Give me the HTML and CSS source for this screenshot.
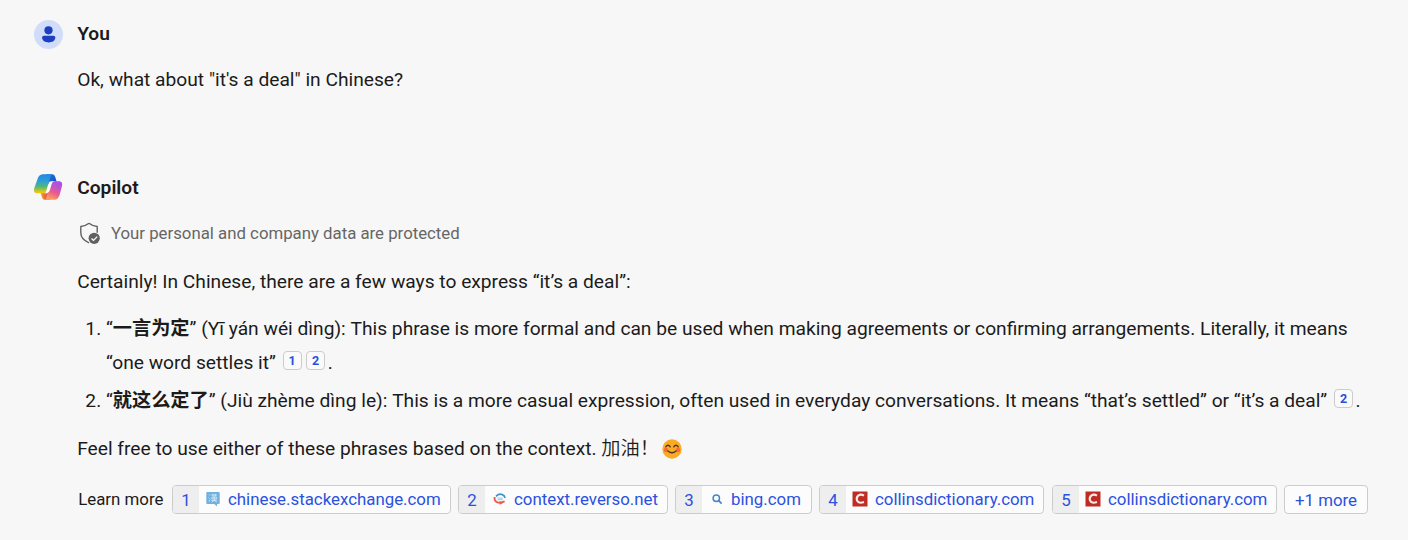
FILE: index.html
```html
<!DOCTYPE html>
<html lang="en">
<head>
<meta charset="utf-8">
<title>Copilot chat</title>
<link rel="stylesheet" href="styles.css">
</head>
<body>
<main class="chat">
  <section class="turn turn-user">
    <svg class="avatar" viewBox="0 0 30 30"><circle cx="14.500" cy="14.500" r="14.500" fill="#d1dbfa"/><circle cx="14.500" cy="10.300" r="4.100" fill="#1b3fbd"/><path d="M9.900 15.800h9.600q1.800 0 1.800 1.800c0 3.200-3.200 4.900-6.600 4.900s-6.600-1.700-6.600-4.900q0-1.800 1.800-1.800z" fill="#1b3fbd"/></svg>
    <div class="body">
      <h2 class="author">You</h2>
      <p class="text question">Ok, what about "it's a deal" in Chinese?</p>
    </div>
  </section>
  <section class="turn turn-bot">
    <svg class="avatar logo" viewBox="0.700 0.700 30 30">
      <defs>
        <linearGradient id="left" x1="0" y1="0" x2="0" y2="1"><stop offset="0" stop-color="#2784e5"/><stop offset=".35" stop-color="#2c9ed6"/><stop offset=".65" stop-color="#52b878"/><stop offset=".95" stop-color="#edca08"/></linearGradient>
        <linearGradient id="right" x1=".7" y1="0" x2=".3" y2="1"><stop offset="0" stop-color="#a650ed"/><stop offset=".35" stop-color="#c456c4"/><stop offset=".6" stop-color="#ec5b88"/><stop offset="1" stop-color="#fca65d"/></linearGradient>
        <linearGradient id="top" x1="0" y1="0" x2="1" y2="1"><stop offset="0" stop-color="#1a7ee0"/><stop offset="1" stop-color="#1745bd"/></linearGradient>
        <linearGradient id="bottom" x1="0" y1="0" x2="1" y2="0"><stop offset="0" stop-color="#f4a52a"/><stop offset=".6" stop-color="#e9584a"/><stop offset="1" stop-color="#d94561"/></linearGradient>
      </defs>
      <path d="M13 2h5.600c2.500 0 3.200 2 3.900 4.500l.8 2.800H19c-2.500 0-3.500 1-4.300 3.500z" fill="url(#top)"/>
      <path d="M17 27.500h-5.200c-2.400 0-3-1.800-3.600-4l-1-3.200H11c2.600 0 3.500-1.300 4.300-3.800z" fill="url(#bottom)"/>
      <path d="M18.700 2H9.500C6.500 2 5 4.200 3.900 7.600L1.100 15.500C.1 18.700.4 21 4 21h5.500c2.300 0 3.100-1.200 3.800-3.500L16.600 6.200C17.300 3.800 17.700 2.200 18.700 2z" fill="url(#left)"/>
      <path d="M12.100 27.500H21c3 0 4.400-2.200 5.500-5.600l2-7.500c.9-3.200.4-5.500-3.200-5.500h-5.100c-2.300 0-3 1.200-3.700 3.500l-3 10.900c-.6 2.400-.6 3.900-1.400 4.200z" fill="url(#right)"/>
      <path d="M16 9.500q1.500-.8 4.800-.6-1.800.5-2.600 3.400l-1.400 4.900c-.9 2.900-2.400 4-6 3.900 2.200-.6 2.600-2.200 3-3.700z" fill="#fff"/>
    </svg>
    <div class="body">
      <h2 class="author">Copilot</h2>
      <div class="notice">
        <svg class="shield" viewBox="0 0 24 24"><path d="M12 2.300c2.500 2 5.100 3 8.200 3.200v6.300M12 2.300c-2.500 2-5.100 3-8.200 3.200v6.300c0 4.600 2.600 7.700 8.200 10" fill="none" stroke="#616161" stroke-width="1.400" stroke-linejoin="round"/><circle cx="17.200" cy="17.300" r="5.600" fill="#616161"/><path d="M14.500 17.500l2 1.900 3.700-3.800" fill="none" stroke="#fff" stroke-width="1.300"/></svg>
        <span>Your personal and company data are protected</span>
      </div>
      <p class="text">Certainly! In Chinese, there are a few ways to express “it’s a deal”:</p>
      <ol class="phrases">
        <li class="phrase"><span class="mark">1.</span><div>“<b>一言为定</b>” (Yī yán wéi dìng): This phrase is more formal and can be used when making agreements or confirming arrangements. Literally, it means<br>“one word settles it” <a class="cite">1</a><a class="cite">2</a>.</div></li>
        <li class="phrase"><span class="mark">2.</span><div>“<b>就这么定了</b>” (Jiù zhème dìng le): This is a more casual expression, often used in everyday conversations. It means “that’s settled” or “it’s a deal” <a class="cite">2</a>.</div></li>
      </ol>
      <p class="text closing">Feel free to use either of these phrases based on the context. <span class="zh">加油！</span>
        <svg class="emoji" viewBox="0 0 20 20"><circle cx="10" cy="10" r="9.700" fill="#fbab23"/><circle cx="4" cy="11" r="2.200" fill="#f76b35"/><circle cx="16" cy="11" r="2.200" fill="#f76b35"/><path d="M3.800 7.900q2.200-3.300 4.400 0M11.800 7.900q2.200-3.300 4.400 0M6 12q4 3.600 8 0" fill="none" stroke="#4a3021" stroke-width="1.300" stroke-linecap="round"/></svg>
      </p>
      <div class="sources">
        <span class="label">Learn more</span>
        <a class="source s1"><span class="num">1</span><svg class="fav" viewBox="0 0 16 16"><path d="M2.300 1h11.400q1 0 1 1v10q0 1-1 1H12v2.600L9.300 13h-7q-1 0-1-1V2q0-1 1-1z" fill="#70b2df"/><path d="M4 3.500l1 1M3.700 6.500l1 1M3.900 10.500l1.200-2M6.300 4H12M8 2.900v2.300M10.300 2.900v2.300M7 6h4.400v1.900H7zM9.200 5.500v4M6.300 9.300H12M9 9.500l-2.300 1.700M9.500 9.500l2.300 1.700" fill="none" stroke="#e9f5fc" stroke-width=".7"/></svg><span class="site">chinese.stackexchange.com</span></a>
        <a class="source s2"><span class="num">2</span><svg class="fav" viewBox="0 0 16 16"><path d="M4 5.300Q8 1.200 12.300 5L13 7" fill="none" stroke="#3e94d1" stroke-width="1.700"/><path d="M2.600 6v2.500q1 3.200 6 3.200l4-1.400" fill="none" stroke="#ed5b4c" stroke-width="1.900"/><path d="M7.500 10l3.500 2L7.800 13.800z" fill="#ed5b4c"/><path d="M5.500 7.100h5.300M5.500 8.700h5.300" stroke="#8cc2e5" stroke-width=".9"/></svg><span class="site">context.reverso.net</span></a>
        <a class="source s3"><span class="num">3</span><svg class="fav" viewBox="0 0 16 16"><circle cx="7.300" cy="7.200" r="3.200" fill="none" stroke="#4487c5" stroke-width="1.500"/><path d="M9.700 9.600l2.900 3" stroke="#4487c5" stroke-width="1.700"/></svg><span class="site">bing.com</span></a>
        <a class="source s4"><span class="num">4</span><svg class="fav" viewBox="0 0 16 16"><path d="M.5.500h15v15H.5z" fill="#bf2c26"/><path d="M12 4.700Q8.800 2.700 6.200 4.600 4 6.500 5 9.400q1.600 3.500 7 1.700" fill="none" stroke="#fbe9e4" stroke-width="2.100"/></svg><span class="site">collinsdictionary.com</span></a>
        <a class="source s5"><span class="num">5</span><svg class="fav" viewBox="0 0 16 16"><path d="M.5.500h15v15H.5z" fill="#bf2c26"/><path d="M12 4.700Q8.800 2.700 6.200 4.600 4 6.500 5 9.400q1.600 3.500 7 1.700" fill="none" stroke="#fbe9e4" stroke-width="2.100"/></svg><span class="site">collinsdictionary.com</span></a>
        <a class="source more">+1 more</a>
      </div>
    </div>
  </section>
</main>
</body>
</html>
```
FILE: styles.css
```css
* { box-sizing: border-box; }
body {
  margin: 0;
  background: #f7f7f7;
  color: #1b1b1b;
  font: 19.2px/34px Roboto, "Noto Sans CJK SC", sans-serif;
  overflow: hidden;
}
.chat { padding: 17px 0 0 34px; height: 540px; white-space: nowrap; }
.turn { display: flex; gap: 13.2px; }
.turn-user { height: 154px; }
.avatar { width: 30px; height: 30px; margin-top: 3px; flex: none; }
.logo { margin-top: 2px; }
.body { flex: 1; }
.author { margin: 0; font-size: 19.2px; line-height: 34px; font-weight: 600; }
.text { margin: 0; }
.question { margin-top: 12px; }
.notice { display: flex; align-items: center; gap: 10.300px; height: 34px; margin: 11px 0 15px; font-size: 16.8px; color: #666; }
.shield { width: 24px; height: 24px; margin-left: -.5px; }
.phrases { list-style: none; margin: 13px 0 14px; padding: 0; display: grid; gap: 4px; }
.phrase { display: flex; }
.mark { width: 28.800px; padding-right: 4.800px; text-align: right; flex: none; }
.cite {
  display: inline-block;
  width: 19px;
  height: 19px;
  margin: 0 2.500px 0 2px;
  border: 1px solid #ccc;
  border-radius: 4px;
  background: #fafafa;
  color: #2a4de0;
  font-size: 12.500px;
  font-weight: 700;
  line-height: 17px;
  text-align: center;
  vertical-align: 4.500px;
}
.cite + .cite { margin-left: 2px; }
.zh { font-weight: 350; }
.emoji { width: 20px; height: 20px; vertical-align: -3.500px; margin-left: -1.700px; }
.sources { display: flex; margin-top: 19px; font-size: 16.850px; line-height: 27px; }
.label { width: 94.800px; padding: 1px 0 0 1px; }
.source { display: flex; height: 29px; border: 1px solid #ccc; border-radius: 4px; background: #fcfcfc; color: #2b51e0; margin-right: 7px; overflow: hidden; }
.num { width: 26px; background: #eee; text-align: center; padding-top: 1px; }
.fav { width: 16px; height: 16px; margin: 5px 6px 0 7px; }
.s1 .fav, .s4 .fav, .s5 .fav { margin-left: 6.500px; margin-right: 6.500px; }
.s1 { width: 279px; }
.s2 { width: 210px; }
.s3 { width: 137px; }
.s4 { width: 225px; margin-right: 8px; }
.s5 { width: 225px; }
.more { width: 84px; justify-content: center; padding-top: 1px; margin-right: 0; }
```
